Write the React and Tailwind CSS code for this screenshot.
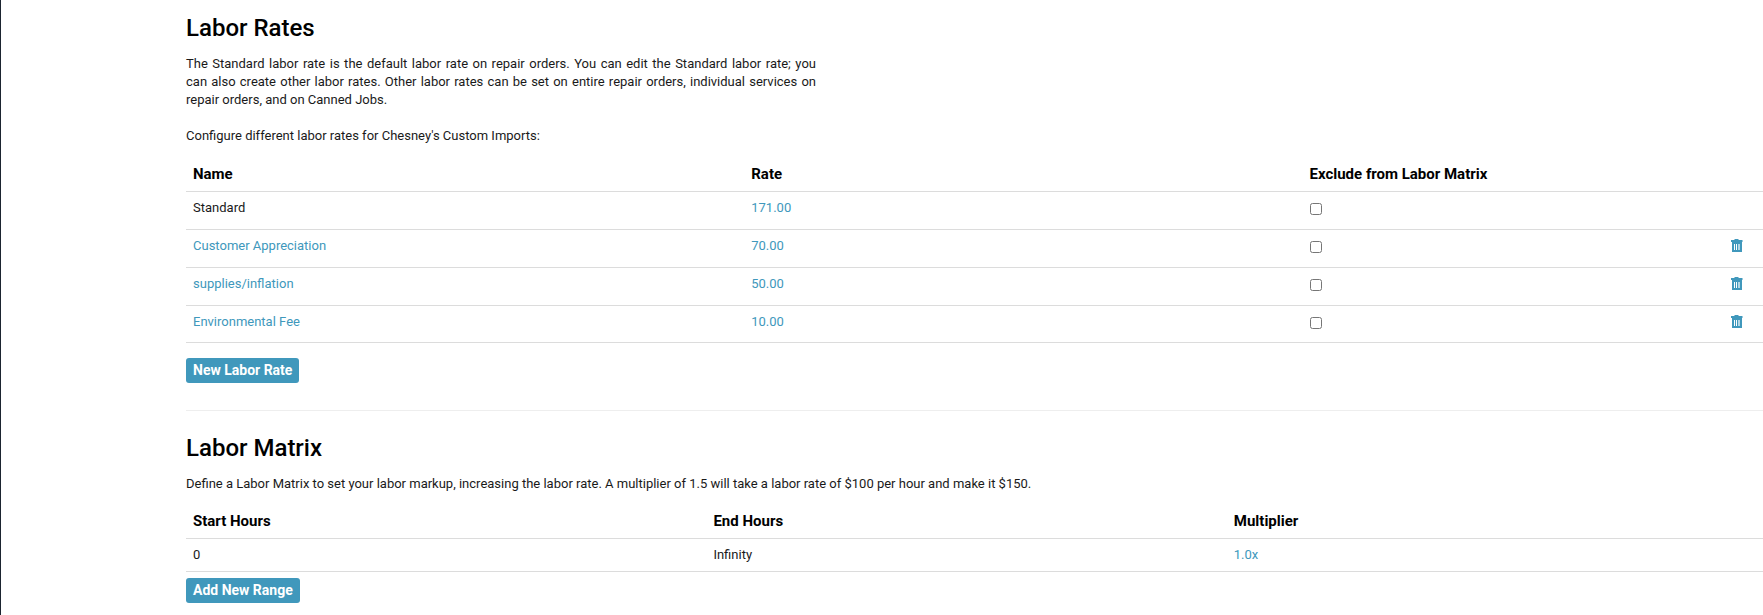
import React, { useState } from "react";

const laborRates = [
  { id: 1, name: "Standard", rate: "171.00", locked: true },
  { id: 2, name: "Customer Appreciation", rate: "70.00" },
  { id: 3, name: "supplies/inflation", rate: "50.00" },
  { id: 4, name: "Environmental Fee", rate: "10.00" },
];

const matrixRows = [{ id: 1, start: "0", end: "Infinity", multiplier: "1.0x" }];

const TrashIcon = () => (
  <svg width="12" height="13" viewBox="0 0 12 13" aria-hidden="true">
    <path
      fill="#4098bc"
      fillRule="evenodd"
      d="M3.5 0h4v1H11.5v2h-11.5V1h3.5zM1 3h10v10H1zM3 5v6h1V5zM5 5v6h1V5zM7 5v6h2V5z"
    />
    <path fill="#4098bc" opacity="0.4" d="M7 5h2v6H7z" />
  </svg>
);

const Link = ({ children }) => (
  <a href="#" className="text-[#4098bc] hover:underline">
    {children}
  </a>
);

const Button = ({ children }) => (
  <button
    type="button"
    className="block h-[25px] rounded-[3px] bg-[#4098bc] px-[7px] pb-[2px] text-[14px] leading-[18px] font-bold text-white"
  >
    {children}
  </button>
);

const Heading = ({ children }) => (
  <h2 className="text-[24px] leading-[30px] font-medium text-black">
    {children}
  </h2>
);

const Th = ({ className, children }) => (
  <th
    className={`px-[7px] pt-[7px] pb-2 text-left text-[15px] leading-[18px] font-bold text-black ${className || ""}`}
  >
    {children}
  </th>
);

const App = () => {
  const [excluded, setExcluded] = useState({});

  const toggle = (id) => setExcluded({ ...excluded, [id]: !excluded[id] });

  return (
    <div className="min-h-screen overflow-hidden border-l border-[#1b2430] bg-white pb-3 pl-[185px] font-['Roboto',sans-serif] text-[13px] leading-[18px] text-[#1a1a1a]">
      <section className="pt-[13px]">
        <Heading>Labor Rates</Heading>
        <p className="mt-[12px] max-w-[630px] text-justify">
          The Standard labor rate is the default labor rate on repair orders.
          You can edit the Standard labor rate; you can also create other labor
          rates. Other labor rates can be set on entire repair orders,
          individual services on repair orders, and on Canned Jobs.
        </p>
        <p className="mt-[18px]">
          Configure different labor rates for Chesney's Custom Imports:
        </p>

        <table className="mt-[13px] w-full table-fixed border-collapse">
          <thead>
            <tr className="border-b border-[#dcdcdc]">
              <Th className="w-[35.4%]">Name</Th>
              <Th className="w-[35.4%]">Rate</Th>
              <Th>Exclude from Labor Matrix</Th>
              <Th className="w-[39px]" />
            </tr>
          </thead>
          <tbody>
            {laborRates.map((item) => (
              <tr
                key={item.id}
                className="h-[38px] border-b border-[#dcdcdc] align-top last:h-[37px]"
              >
                <td className="px-[7px] pt-[7px]">
                  {item.locked ? item.name : <Link>{item.name}</Link>}
                </td>
                <td className="px-[7px] pt-[7px]">
                  <Link>{item.rate}</Link>
                </td>
                <td className="px-[7px] pt-[11px]">
                  <input
                    type="checkbox"
                    aria-label={`Exclude ${item.name}`}
                    className="block h-3 w-3"
                    checked={!!excluded[item.id]}
                    onChange={() => toggle(item.id)}
                  />
                </td>
                <td className="px-[7px] pt-[9px]">
                  {!item.locked && (
                    <button
                      type="button"
                      aria-label={`Delete ${item.name}`}
                      className="block"
                    >
                      <TrashIcon />
                    </button>
                  )}
                </td>
              </tr>
            ))}
          </tbody>
        </table>
        <div className="mt-[15px]">
          <Button>New Labor Rate</Button>
        </div>
      </section>

      <section className="mt-[27px] border-t border-[#eeeeee] pt-[22px]">
        <Heading>Labor Matrix</Heading>
        <p className="mt-[12px]">
          Define a Labor Matrix to set your labor markup, increasing the labor
          rate. A multiplier of 1.5 will take a labor rate of $100 per hour and
          make it $150.
        </p>

        <table className="mt-[12px] w-full table-fixed border-collapse">
          <thead>
            <tr className="border-b border-[#dcdcdc]">
              <Th className="w-[33%]">Start Hours</Th>
              <Th className="w-[33%]">End Hours</Th>
              <Th>Multiplier</Th>
            </tr>
          </thead>
          <tbody>
            {matrixRows.map((row) => (
              <tr key={row.id} className="border-b border-[#dcdcdc]">
                <td className="p-[7px]">{row.start}</td>
                <td className="p-[7px]">{row.end}</td>
                <td className="p-[7px]">
                  <Link>{row.multiplier}</Link>
                </td>
              </tr>
            ))}
          </tbody>
        </table>
        <div className="mt-[6px]">
          <Button>Add New Range</Button>
        </div>
      </section>
    </div>
  );
};

export default App;
